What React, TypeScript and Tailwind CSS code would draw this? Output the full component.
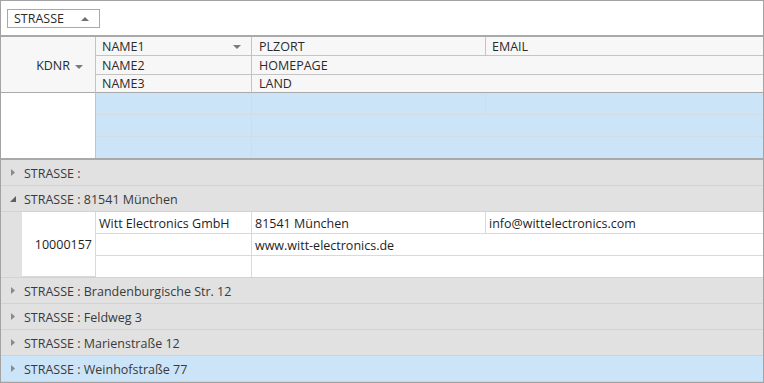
import React from "react";

const FONT = { fontFamily: '"Open Sans", "Noto Sans", sans-serif' };

function TriDown({ className = "" }: { className?: string }) {
  return (
    <svg width="8" height="4" viewBox="0 0 8 4" className={className}>
      <path d="M0 0 L8 0 L4 4 Z" fill="#7a7a7a" />
    </svg>
  );
}

function TriUp({ className = "" }: { className?: string }) {
  return (
    <svg width="8" height="4" viewBox="0 0 8 4" className={className}>
      <path d="M0 4 L8 4 L4 0 Z" fill="#6f6f6f" />
    </svg>
  );
}

function Collapsed() {
  return (
    <svg width="4" height="7" viewBox="0 0 4 7" className="shrink-0">
      <path d="M0 0 L4 3.5 L0 7 Z" fill="#8a8a8a" />
    </svg>
  );
}

function Expanded() {
  return (
    <svg width="6" height="6" viewBox="0 0 6 6" className="shrink-0">
      <path d="M6 0 L6 6 L0 6 Z" fill="#5f5f5f" />
    </svg>
  );
}

const groups = [
  { label: "STRASSE :", open: false },
  { label: "STRASSE : 81541 München", open: true },
  { label: "STRASSE : Brandenburgische Str. 12", open: false },
  { label: "STRASSE : Feldweg 3", open: false },
  { label: "STRASSE : Marienstraße 12", open: false },
  { label: "STRASSE : Weinhofstraße 77", open: false, selected: true },
];

function GroupRow({ label, open, selected }: { label: string; open: boolean; selected?: boolean }) {
  return (
    <div
      className={`h-[26px] flex items-center border-b border-[#d2d2d2] text-[12.5px] text-[#3a3a3a] ${
        selected ? "bg-[#cce4f7]" : "bg-[#e1e1e1]"
      }`}
    >
      <div className="w-[23px] flex items-center justify-center pl-[1px]">
        {open ? <Expanded /> : <Collapsed />}
      </div>
      <span className="pt-[3px]">{label}</span>
    </div>
  );
}

function DataBlock() {
  const cell = "border-r border-b border-[#d9d9d9] bg-white flex items-center px-[3px] pt-[3px]";
  return (
    <div className="flex bg-[#e1e1e1] border-b border-[#d2d2d2]">
      <div className="w-[21px] shrink-0" />
      <div className="flex-1 grid grid-cols-[74px_156px_234px_1fr] grid-rows-[22px_22px_21px] text-[12.5px] text-[#1e1e1e]">
        <div className={`${cell} row-span-3 justify-end`}>10000157</div>
        <div className={cell}>Witt Electronics GmbH</div>
        <div className={cell}>81541 München</div>
        <div className={`${cell} border-r-0`}>info@wittelectronics.com</div>
        <div className={cell} />
        <div className={`${cell} col-span-2 border-r-0`}>www.witt-electronics.de</div>
        <div className={`${cell} border-b-0`} />
        <div className={`${cell} col-span-2 border-r-0 border-b-0`} />
      </div>
    </div>
  );
}

export default function App() {
  const head = "border-r border-b border-[#c4c4c4] flex items-center pt-[2px]";
  const blue = "bg-[#cce4f7] border-r border-b border-[#d3dbe3]";
  return (
    <div className="w-[764px] h-[383px] bg-white border border-[#a3a3a3] overflow-hidden" style={FONT}>
      {/* group panel */}
      <div className="h-[36px] border-b-2 border-[#a9a9a9] pl-[6px] pt-[8px]">
        <div className="w-[93px] h-[19px] border border-[#a9a9a9] flex items-center pl-[6px] pr-[10px] text-[12.5px] text-[#2b2b2b]">
          <span className="flex-1 pt-[2px]">STRASSE</span>
          <TriUp />
        </div>
      </div>

      {/* column header */}
      <div className="grid grid-cols-[95px_156px_234px_1fr] grid-rows-[19px_19px_18px] bg-[#f7f7f7] text-[12.5px] text-[#2b2b2b]">
        <div className={`${head} row-span-3 justify-end pr-[12px] border-b-[#a9a9a9] pt-[4px]`}>
          <span>KDNR</span>
          <TriDown className="ml-[5px]" />
        </div>
        <div className={`${head} pl-[6px] pr-[10px]`}>
          <span className="flex-1">NAME1</span>
          <TriDown />
        </div>
        <div className={`${head} pl-[7px]`}>PLZORT</div>
        <div className={`${head} pl-[6px] border-r-0`}>EMAIL</div>
        <div className={`${head} pl-[6px]`}>NAME2</div>
        <div className={`${head} pl-[7px] col-span-2 border-r-0`}>HOMEPAGE</div>
        <div className={`${head} pl-[6px] border-b-[#a9a9a9]`}>NAME3</div>
        <div className={`${head} pl-[7px] col-span-2 border-r-0 border-b-[#a9a9a9]`}>LAND</div>
      </div>

      {/* new row */}
      <div className="grid grid-cols-[95px_156px_234px_1fr] grid-rows-[22px_22px_21px] border-b-2 border-[#a9a9a9]">
        <div className="row-span-3 bg-white border-r border-[#c4c4c4]" />
        <div className={blue} />
        <div className={blue} />
        <div className={`${blue} border-r-0`} />
        <div className={blue} />
        <div className={`${blue} col-span-2 border-r-0`} />
        <div className={`${blue} border-b-0`} />
        <div className={`${blue} col-span-2 border-r-0 border-b-0`} />
      </div>

      {/* grouped rows */}
      {groups.map((g) => (
        <React.Fragment key={g.label}>
          <GroupRow label={g.label} open={g.open} selected={g.selected} />
          {g.open && <DataBlock />}
        </React.Fragment>
      ))}
    </div>
  );
}
